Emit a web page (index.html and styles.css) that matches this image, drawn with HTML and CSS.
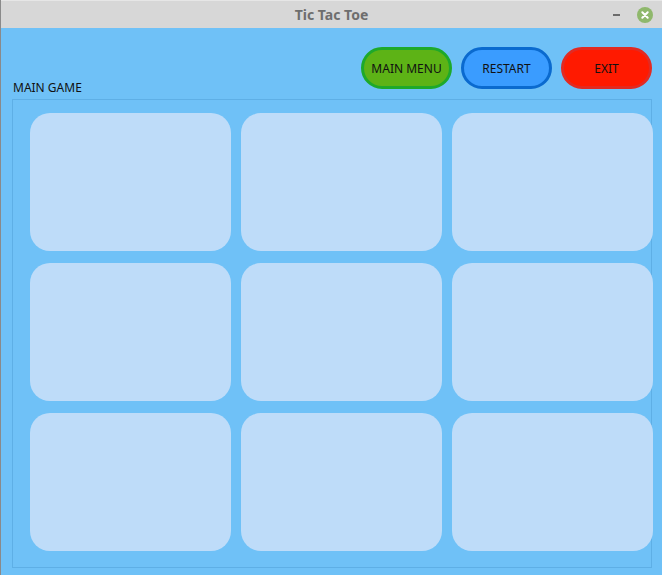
FILE: index.html
```html
<!DOCTYPE html>
<html>
<head>
<meta charset="utf-8">
<link rel="stylesheet" href="styles.css">
</head>
<body>
<div class="window">
  <div class="titlebar">
    <span class="title">Tic Tac Toe</span>
    <span class="minimize"></span>
    <span class="close">
      <svg width="16" height="16" viewBox="0 0 16 16"><circle cx="8" cy="8" r="8" fill="#8fb86c"/><path d="M5.3 5.3 L10.7 10.7 M10.7 5.3 L5.3 10.7" stroke="#fff" stroke-width="2" stroke-linecap="round"/></svg>
    </span>
  </div>
  <div class="content">
    <div class="toolbar">
      <button class="btn btn-menu">MAIN MENU</button>
      <button class="btn btn-restart">RESTART</button>
      <button class="btn btn-exit">EXIT</button>
    </div>
    <div class="label">MAIN GAME</div>
    <div class="groupbox">
      <div class="board">
        <div class="cell"></div>
        <div class="cell"></div>
        <div class="cell"></div>
        <div class="cell"></div>
        <div class="cell"></div>
        <div class="cell"></div>
        <div class="cell"></div>
        <div class="cell"></div>
        <div class="cell"></div>
      </div>
    </div>
  </div>
</div>
</body>
</html>
```
FILE: styles.css
```css
html, body {
  margin: 0;
  padding: 0;
  width: 662px;
  height: 575px;
  overflow: hidden;
  font-family: "Noto Sans", "Open Sans", sans-serif;
}
.window {
  width: 662px;
  height: 575px;
  display: flex;
  flex-direction: column;
  background: #6fc1f7;
  border-left: 1px solid #8a8a8a;
  box-sizing: border-box;
}
.titlebar {
  height: 28px;
  flex: none;
  background: #d7d7d7;
  position: relative;
  display: flex;
  align-items: center;
  justify-content: center;
  border-top: 1px solid #e6e6e6;
  box-sizing: border-box;
}
.title {
  font-size: 14px;
  font-weight: bold;
  color: #6e6e6e;
}
.minimize {
  position: absolute;
  left: 612px;
  top: 13px;
  width: 7px;
  height: 2px;
  background: #6b6b6b;
}
.close {
  position: absolute;
  left: 636px;
  top: 6px;
  width: 16px;
  height: 16px;
}
.close svg { display: block; }
.content {
  flex: 1;
  padding: 19px 10px 0 11px;
  display: flex;
  flex-direction: column;
}
.toolbar {
  display: flex;
  justify-content: flex-end;
  gap: 9px;
}
.btn {
  width: 91px;
  height: 42px;
  border-radius: 21px;
  border: 3px solid;
  font-family: "Noto Sans", "Open Sans", sans-serif;
  font-size: 12px;
  color: #111;
  padding: 0;
}
.btn-menu {
  background: #5db316;
  border-color: #1ea92a;
}
.btn-restart {
  background: #3a9cff;
  border-color: #0a6acf;
}
.btn-exit {
  background: #ff1a00;
  border-color: #e22a22;
}
.label {
  margin-top: -9px;
  padding-left: 1px;
  font-size: 12px;
  line-height: 16px;
  color: #111;
  height: 16px;
}
.groupbox {
  margin-top: 3px;
  width: 640px;
  height: 469px;
  border: 1px solid #5eafe6;
  box-sizing: border-box;
}
.board {
  padding: 13px 0 0 17px;
  display: grid;
  grid-template-columns: 201px 201px 201px;
  grid-template-rows: 138px 138px 138px;
  column-gap: 10px;
  row-gap: 12px;
}
.cell {
  background: #bedcf9;
  border-radius: 20px;
}
```
